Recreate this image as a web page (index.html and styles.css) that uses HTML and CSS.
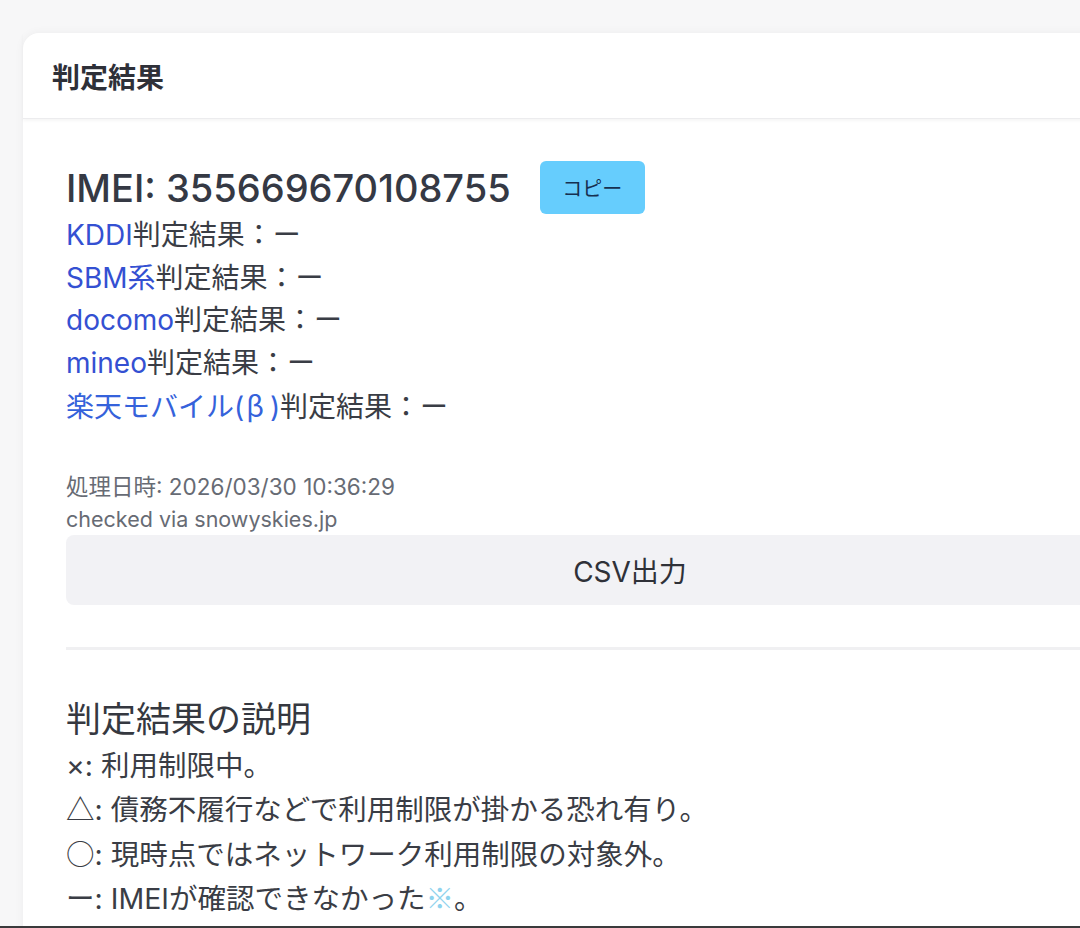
FILE: index.html
```html
<!DOCTYPE html>
<html lang="ja">
<head>
<meta charset="utf-8">
<title>判定結果</title>
<link rel="stylesheet" href="styles.css">
</head>
<body>
<div class="page">
  <section class="card">
    <header class="card-header">判定結果</header>
    <div class="card-body">
      <div class="imei-row">
        <h2 class="imei">IMEI: 355669670108755</h2>
        <button class="copy-btn">コピー</button>
      </div>
      <ul class="results">
        <li><a class="carrier">KDDI</a>判定結果：ー</li>
        <li><a class="carrier">SBM系</a>判定結果：ー</li>
        <li><a class="carrier">docomo</a>判定結果：ー</li>
        <li><a class="carrier">mineo</a>判定結果：ー</li>
        <li><a class="carrier rakuten">楽天モバイル(<span class="beta">β</span>)</a>判定結果：ー</li>
      </ul>
      <div class="meta">
        <p class="meta-date">処理日時: 2026/03/30 10:36:29</p>
        <p class="meta-via">checked via snowyskies.jp</p>
      </div>
      <button class="csv-btn">CSV出力</button>
      <hr class="divider">
      <h3 class="explain-title">判定結果の説明</h3>
      <ul class="explain">
        <li>×: 利用制限中。</li>
        <li><span class="cjk">△</span>: 債務不履行などで利用制限が掛かる恐れ有り。</li>
        <li><span class="cjk">○</span>: 現時点ではネットワーク利用制限の対象外。</li>
        <li><span class="cjk">ー</span>: IMEIが確認できなかった<span class="note">※</span>。</li>
        <li class="last-line"><span class="cjk">ー</span>: <span class="note-link">【</span>IMEIが未登録の端末や、<span class="note-link">海外版端末の情報は取得できない場合があります</span></li>
      </ul>
    </div>
  </section>
</div>
<div class="bottom-bar"></div>
</body>
</html>
```

FILE: styles.css
```css
html, body {
  margin: 0;
  padding: 0;
  overflow: hidden;
  background: #f7f7f8;
}

body {
  font-family: "Inter", "Noto Sans CJK JP", sans-serif;
  color: #3a3d45;
  height: 928px;
}

.cjk {
  font-family: "Noto Sans CJK JP", sans-serif;
}

.beta {
  font-family: "Noto Sans CJK JP", sans-serif;
  padding: 0 6px 0 2px;
}

.page {
  width: 1260px;
  padding: 33px 23px 0 23px;
  box-sizing: border-box;
}

.card {
  background: #ffffff;
  border-radius: 16px;
  box-shadow: 0 0 10px rgba(0, 0, 0, 0.05);
}

.card-header {
  height: 85px;
  display: flex;
  align-items: center;
  padding: 0 29px;
  font-size: 28px;
  font-weight: 700;
  color: #2e3038;
  border-bottom: 1px solid #ececee;
  box-shadow: 0 2px 3px rgba(0, 0, 0, 0.04);
}

.card-body {
  padding: 42px 43px 0 43px;
}

.imei-row {
  display: flex;
  align-items: center;
  gap: 29px;
  height: 53px;
}

.imei {
  margin: 0;
  font-size: 38px;
  font-weight: 500;
  color: #353944;
}

.copy-btn {
  width: 105px;
  height: 53px;
  border: none;
  border-radius: 6px;
  background: #66cdfd;
  color: #163050;
  font-family: "Noto Sans CJK JP", sans-serif;
  font-size: 20px;
}

.results, .explain {
  list-style: none;
  margin: 0;
  padding: 0;
}

.results li {
  font-size: 28px;
  line-height: 42.5px;
  color: #3a3d45;
}

.carrier {
  color: #3450d2;
}

.rakuten {
  color: #3562db;
}

.meta {
  margin-top: 42px;
  color: #676b74;
}

.meta p {
  margin: 0;
  line-height: 32px;
}

.meta-date {
  font-size: 22.5px;
}

.meta-via {
  font-size: 21.5px;
}

.csv-btn {
  display: block;
  width: 100%;
  height: 70px;
  border: none;
  border-radius: 8px;
  background: #f2f2f5;
  color: #2f3138;
  font-family: "Inter", "Noto Sans CJK JP", sans-serif;
  font-size: 28px;
}

.divider {
  margin: 42px 0 0 0;
  border: none;
  height: 3px;
  background: #f0f0f2;
}

.explain-title {
  margin: 43px 0 0 0;
  font-size: 35px;
  font-weight: 400;
  line-height: 52px;
  color: #353840;
}

.explain li {
  font-size: 28.5px;
  line-height: 42.5px;
  color: #3a3d45;
}

.explain .last-line {
  white-space: nowrap;
}

.note {
  font-family: "Noto Sans CJK JP", sans-serif;
  color: #8fd3ee;
}

.note-link {
  color: #6fb4dc;
}

.bottom-bar {
  position: fixed;
  left: 0;
  right: 0;
  bottom: 0;
  height: 2px;
  background: #3a3a3c;
}
```
